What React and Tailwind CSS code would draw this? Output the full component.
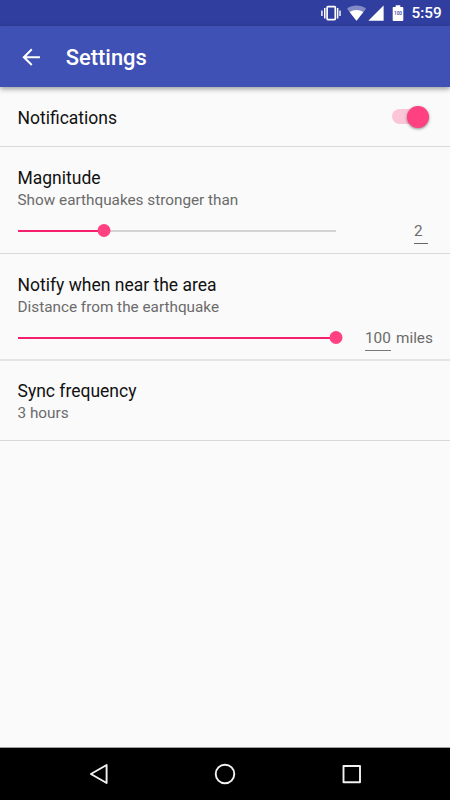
function StatusBar() {
  return (
    <div className="flex h-[26px] shrink-0 items-center bg-[#303f9f] text-white">
      <svg className="ml-[320px] h-[26px] w-[86px]" viewBox="320 0 86 26" fill="currentColor">
        <rect x="327.1" y="6.6" width="8.2" height="13" rx="0.8" fill="none" stroke="currentColor" strokeWidth="1.7" />
        <path d="M324 8h1.5v10.4H324zM336.9 8h1.5v10.4h-1.5zM321.2 10.4h1.4v5.6h-1.4zM339.3 10.4h1.4v5.6h-1.4z" />
        <path d="M356.5 20.7 L347 8.7 C352.3 4.3 360.7 4.3 366 8.7 Z" opacity="0.4" />
        <path d="M356.5 20.7 L349.6 12 C353.8 9.2 359.2 9.2 363.4 12 Z" />
        <path d="M368.3 20.7 L383.6 5.4 V20.7 Z" />
        <path d="M395.7 5.2h4.6v1.7h2.2c.4 0 .8.4.8.8v12.5c0 .5-.4.8-.8.8h-9c-.5 0-.8-.3-.8-.8V7.7c0-.4.3-.8.8-.8h2.2z" />
        <text x="398" y="15.2" textAnchor="middle" fontSize="4.8" fontWeight="500" fill="#303f9f" fontFamily="Roboto, sans-serif">100</text>
      </svg>
      <span className="mt-[2px] ml-[5.5px] text-[15.3px] leading-none font-medium">5:59</span>
    </div>
  )
}

function AppBar() {
  return (
    <header className="relative flex h-[61px] shrink-0 items-center bg-[#3f51b5] pl-[17.5px] text-white shadow-[0_2px_5px_rgba(0,0,0,0.38)]">
      <svg className="mt-[1px] h-[26.3px] w-[26.3px]" viewBox="0 0 24 24" fill="currentColor">
        <path d="M20 11.1H7.7l5.5-5.6L12 4.2l-8 7.8 8 7.8 1.2-1.3-5.5-5.6H20z" />
      </svg>
      <h1 className="mt-[2px] ml-[22px] text-[21.9px] leading-[30px] font-medium">Settings</h1>
    </header>
  )
}

function Label({ title, summary }) {
  return (
    <div>
      <h2 className="text-[17.5px] leading-[22px] text-[#111]">{title}</h2>
      {summary && <p className="text-[15.3px] leading-[22px] text-[#6b6b6b]">{summary}</p>}
    </div>
  )
}

function Slider({ value, max }) {
  const percent = `${(value / max) * 100}%`

  return (
    <div className="relative h-[13px] w-[318px]">
      <div className="absolute inset-x-0 top-[5.5px] h-[2px] bg-[#d3d3d3]" />
      <div className="absolute top-[5.5px] left-0 h-[2px] bg-[#f51f6e]" style={{ width: percent }} />
      <div className="absolute top-0 h-[13px] w-[13px] -translate-x-1/2 rounded-full bg-[#ff4081]" style={{ left: percent }} />
    </div>
  )
}

function Toggle() {
  return (
    <div className="relative h-[22px] w-[37px]">
      <div className="absolute top-[3.5px] left-0 h-[15px] w-[32px] rounded-full bg-[#fbc6d8]" />
      <div className="absolute top-0 right-0 h-[22px] w-[22px] rounded-full bg-[#ff4081] shadow-[0_1px_3px_rgba(0,0,0,0.45)]" />
    </div>
  )
}

function NavBar() {
  return (
    <nav className="flex h-[53px] shrink-0 items-center border-t border-[#a0a0a0] bg-black">
      <svg className="h-[52px] w-full" viewBox="0 748 450 52" fill="none" stroke="#f2f2f2" strokeWidth="1.9" strokeLinejoin="round">
        <path d="M106.6 765 V783 L90.9 774 Z" />
        <circle cx="225" cy="774" r="9.3" />
        <rect x="343.5" y="766" width="16.5" height="16.2" />
      </svg>
    </nav>
  )
}

export default function App() {
  return (
    <div className="flex h-[800px] w-[450px] flex-col overflow-hidden bg-[#fafafa] font-['Roboto',sans-serif]">
      <StatusBar />
      <AppBar />
      <main className="flex-1">
        <section className="flex h-[60px] items-center justify-between border-b border-[#d8d8d8] pr-[21px] pl-[17.5px]">
          <div className="pt-[2px]"><Label title="Notifications" /></div>
          <Toggle />
        </section>

        <section className="h-[107px] border-b border-[#d8d8d8] pt-[20px] pl-[17.5px]">
          <Label title="Magnitude" summary="Show earthquakes stronger than" />
          <div className="mt-[10px] flex h-[26px] items-start">
            <div className="pt-[3px]"><Slider value={27.3} max={100} /></div>
            <span className="ml-[78.5px] h-[23px] w-[14px] border-b border-[#666] text-[15.3px] leading-[21px] text-[#6b6b6b]">2</span>
          </div>
        </section>

        <section className="h-[107px] border-b-2 border-[#e4e4e4] pt-[20px] pl-[17.5px]">
          <Label title="Notify when near the area" summary="Distance from the earthquake" />
          <div className="mt-[10px] flex h-[26px] items-start text-[15.3px] leading-[20px] text-[#6b6b6b]">
            <div className="pt-[3px]"><Slider value={100} max={100} /></div>
            <span className="ml-[29.5px] h-[23px] w-[26px] border-b border-[#777]">100</span>
            <span className="ml-[5px]">miles</span>
          </div>
        </section>

        <section className="h-[80px] border-b border-[#d8d8d8] pt-[19px] pl-[17.5px]">
          <Label title="Sync frequency" summary="3 hours" />
        </section>
      </main>
      <NavBar />
    </div>
  )
}
